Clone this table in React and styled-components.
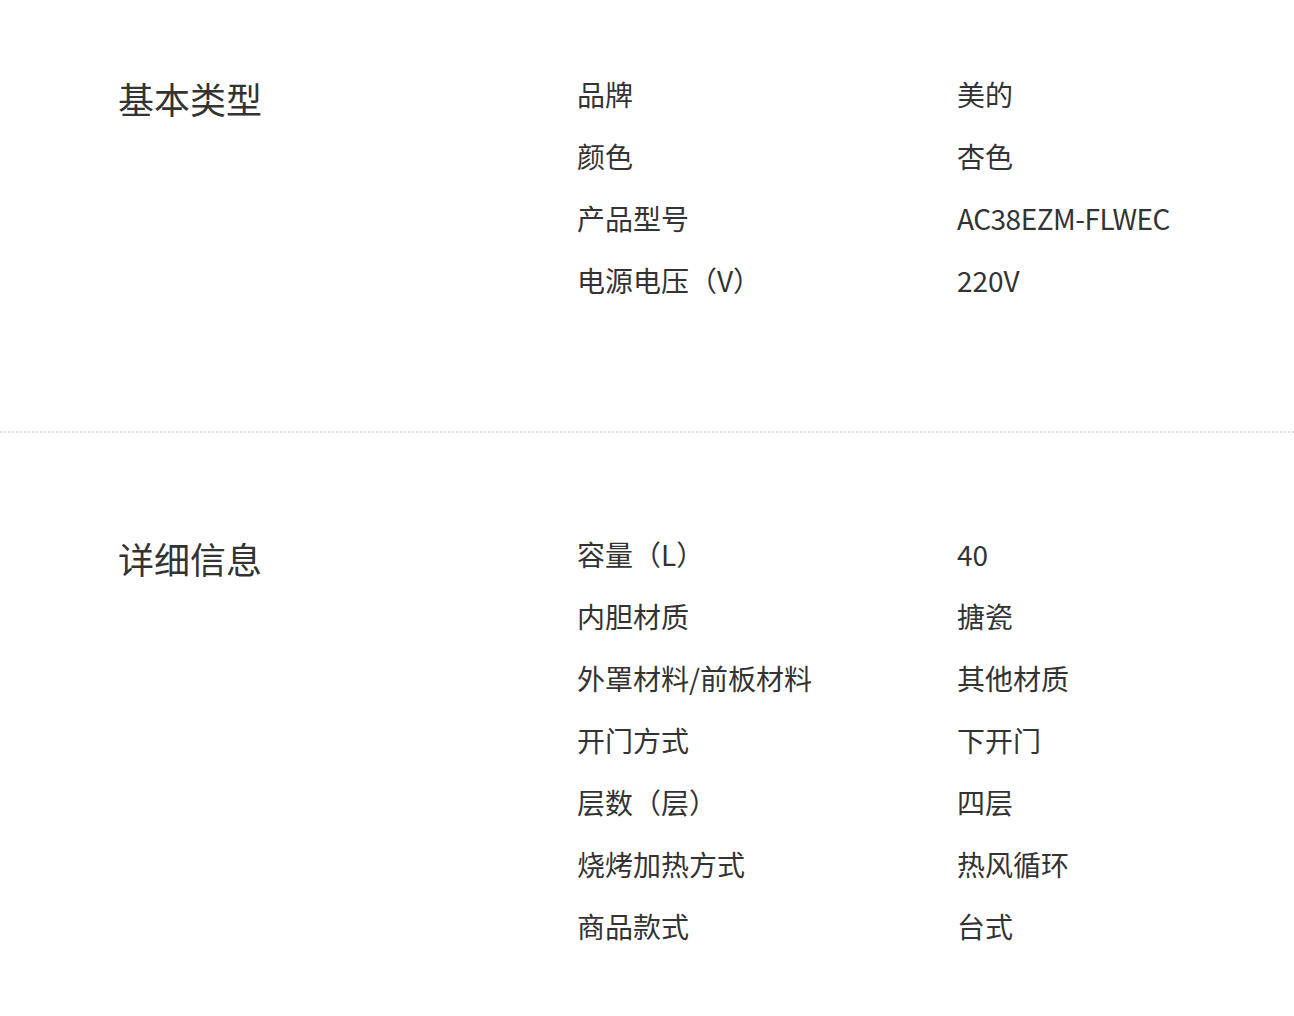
import React from "react";
import styled, { createGlobalStyle } from "styled-components";

const GlobalStyle = createGlobalStyle`
  html, body {
    margin: 0;
    padding: 0;
    background: #fff;
  }
  body {
    font-family: "Noto Sans CJK SC", "Noto Sans", sans-serif;
    color: #333;
  }
`;

const specGroups = [
  {
    title: "基本类型",
    rows: [
      ["品牌", "美的"],
      ["颜色", "杏色"],
      ["产品型号", "AC38EZM-FLWEC"],
      ["电源电压（V）", "220V"],
    ],
  },
  {
    title: "详细信息",
    rows: [
      ["容量（L）", "40"],
      ["内胆材质", "搪瓷"],
      ["外罩材料/前板材料", "其他材质"],
      ["开门方式", "下开门"],
      ["层数（层）", "四层"],
      ["烧烤加热方式", "热风循环"],
      ["商品款式", "台式"],
    ],
  },
];

const Page = styled.div`
  width: 100%;
`;

const Section = styled.section`
  display: grid;
  grid-template-columns: 459px 380px 1fr;
  padding: ${({ first }) => (first ? "63px 0 120px 118px" : "90px 0 60px 118px")};
  border-top: ${({ first }) => (first ? "none" : "2px dotted #dcdcdc")};
`;

const Heading = styled.h2`
  margin: 0;
  padding-top: 4px;
  font-size: 36px;
  font-weight: 400;
  line-height: 62px;
  color: #333;
`;

const Table = styled.dl`
  grid-column: 2 / 4;
  margin: 0;
  display: grid;
  grid-template-columns: 380px 1fr;
`;

const Label = styled.dt`
  margin: 0;
  font-size: 28px;
  line-height: 62px;
  color: #333;
  white-space: nowrap;
`;

const Value = styled.dd`
  margin: 0;
  font-size: 28px;
  line-height: 62px;
  color: #333;
  white-space: nowrap;
  letter-spacing: ${({ latin }) => (latin ? "-0.5px" : "0")};
`;

function SpecSection({ group, first }) {
  return (
    <Section first={first}>
      <Heading>{group.title}</Heading>
      <Table>
        {group.rows.map(([label, value]) => (
          <React.Fragment key={label}>
            <Label>{label}</Label>
            <Value latin={/^[A-Z]/.test(value)}>{value}</Value>
          </React.Fragment>
        ))}
      </Table>
    </Section>
  );
}

export default function App() {
  return (
    <Page>
      <GlobalStyle />
      {specGroups.map((group, i) => (
        <SpecSection key={group.title} group={group} first={i === 0} />
      ))}
    </Page>
  );
}
